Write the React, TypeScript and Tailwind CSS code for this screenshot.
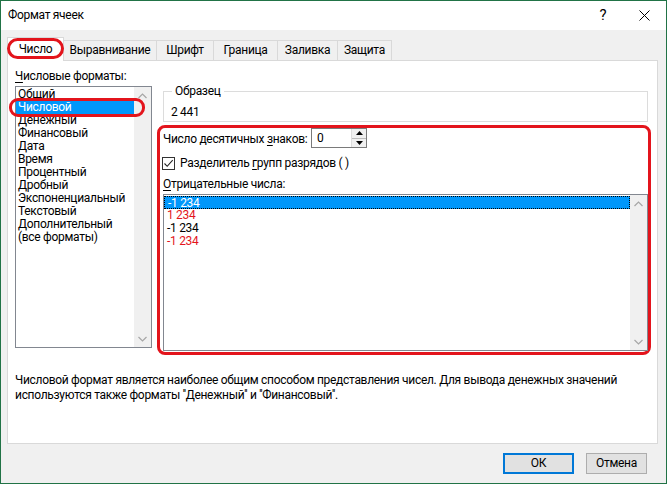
import React from 'react';

const formats = [
  'Общий',
  'Числовой',
  'Денежный',
  'Финансовый',
  'Дата',
  'Время',
  'Процентный',
  'Дробный',
  'Экспоненциальный',
  'Текстовый',
  'Дополнительный',
  '(все форматы)',
];

const negatives = [
  { text: '-1 234', red: false },
  { text: '1 234', red: true },
  { text: '-1 234', red: false },
  { text: '-1 234', red: true },
];

const tabs = [
  { label: 'Выравнивание', w: 'w-[93px]' },
  { label: 'Шрифт', w: 'w-[57px]' },
  { label: 'Граница', w: 'w-[64px]' },
  { label: 'Заливка', w: 'w-[60px]' },
  { label: 'Защита', w: 'w-[54px]' },
];

function Chevron({ down }: { down?: boolean }) {
  return (
    <svg width="9" height="6" viewBox="0 0 9 6" className={down ? 'rotate-180' : ''}>
      <path d="M0.5 5L4.5 1L8.5 5" fill="none" stroke="#a6a6a6" strokeWidth="1.2" />
    </svg>
  );
}

function ScrollBar() {
  return (
    <div className="w-[17px] bg-[#f0f0f0] flex flex-col justify-between items-center">
      <div className="h-[17px] flex items-center justify-center">
        <Chevron />
      </div>
      <div className="h-[17px] flex items-center justify-center">
        <Chevron down />
      </div>
    </div>
  );
}

export default function App() {
  return (
    <div className="w-[667px] h-[484px] border border-[#217346] bg-[#f0f0f0] flex flex-col font-['Roboto',sans-serif] text-[12px] leading-[15px] tracking-[-0.3px] text-black">
      {/* title bar */}
      <div className="h-[29px] bg-white flex items-center pl-[7px] shrink-0">
        <span className="flex-1">Формат ячеек</span>
        <span className="w-[20px] text-center text-[15px] mr-[26px]">?</span>
        <svg width="11" height="11" viewBox="0 0 11 11" className="mr-[16px]">
          <path d="M0.5 0.5L10.5 10.5M10.5 0.5L0.5 10.5" stroke="#000" strokeWidth="1" />
        </svg>
      </div>

      <div className="flex-1 flex flex-col pl-[6px]">
        {/* tabs */}
        <div className="flex items-end h-[30px] shrink-0">
          <div className="relative w-[57px] h-[24px] bg-white border border-b-0 border-[#d9d9d9] flex items-center justify-center z-10 -mb-px">
            Число
            <span className="absolute left-[-1px] top-[0px] w-[57px] h-[21px] rounded-[11px] border-[3px] border-[#e3141c]" />
          </div>
          {tabs.map((t) => (
            <div
              key={t.label}
              className={`${t.w} h-[20px] border border-b-0 border-l-0 border-[#d9d9d9] flex items-center justify-center`}
            >
              {t.label}
            </div>
          ))}
        </div>

        {/* panel */}
        <div className="w-[651px] h-[384px] bg-white border border-[#d9d9d9] flex flex-col shrink-0">
          <div className="flex items-start">
            {/* left column */}
            <div className="ml-[7px] mt-[8px]">
              <div>
                <u className="underline-offset-2">Ч</u>исловые форматы:
              </div>
              <div className="relative mt-[2px] w-[137px] h-[262px] border border-[#828790] flex">
                <div className="flex-1 pt-[1px]">
                  {formats.map((f, i) => (
                    <div
                      key={f}
                      className={`h-[13px] leading-[13px] pl-[2px] ${i === 1 ? 'bg-[#0097fb] text-white' : ''}`}
                    >
                      {f}
                    </div>
                  ))}
                </div>
                <ScrollBar />
                <span className="absolute left-[-7px] top-[11px] w-[136px] h-[19px] rounded-[9px] border-[3px] border-[#e3141c]" />
              </div>
            </div>

            {/* right column */}
            <div className="ml-[5px] mt-[23px] w-[494px]">
              <fieldset className="ml-[6px] w-[485px] border border-[#dcdcdc] px-[7px] pt-[6px] pb-[1px]">
                <legend className="ml-[1px] px-[3px]">Образец</legend>
                <div>2 441</div>
              </fieldset>

              <div className="mt-[3px] border-[3px] border-[#e3141c] rounded-[8px] pl-[3px] pb-[1px]">
                <div className="flex items-center">
                  <span className="w-[148px] whitespace-nowrap pt-[2px]">
                    Число десятичных <u className="underline-offset-2">з</u>наков:
                  </span>
                  <div className="w-[56px] h-[20px] border border-[#7a7a7a] flex">
                    <span className="flex-1 pl-[5px] leading-[18px]">0</span>
                    <div className="w-[15px] flex flex-col border-l border-[#dcdcdc]">
                      <div className="flex-1 bg-[#f0f0f0] flex items-center justify-center border-b border-[#bcbcbc]">
                        <svg width="7" height="4" viewBox="0 0 7 4">
                          <path d="M0 4L3.5 0L7 4Z" fill="#000" />
                        </svg>
                      </div>
                      <div className="flex-1 bg-[#f0f0f0] flex items-center justify-center">
                        <svg width="7" height="4" viewBox="0 0 7 4">
                          <path d="M0 0L3.5 4L7 0Z" fill="#000" />
                        </svg>
                      </div>
                    </div>
                  </div>
                </div>

                <div className="flex items-center mt-[9px] h-[13px]">
                  <div className="w-[13px] h-[13px] border border-[#333] flex items-center justify-center -ml-px">
                    <svg width="11" height="11" viewBox="0 0 11 11">
                      <path d="M1.5 5.5L4.2 8.3L9.7 2.2" fill="none" stroke="#222" strokeWidth="1.1" />
                    </svg>
                  </div>
                  <span className="ml-[5px]">
                    Разделитель <u className="underline-offset-2">г</u>рупп разрядов ( )
                  </span>
                </div>

                <div className="mt-[7px]">
                  <u className="underline-offset-2">О</u>трицательные числа:
                </div>

                <div className="mt-[2px] h-[157px] border border-[#828790] flex">
                  <div className="flex-1 pt-[1px]">
                    {negatives.map((n, i) => (
                      <div
                        key={i}
                        className={`h-[13px] leading-[12px] pl-[3px] ${
                          i === 0
                            ? 'bg-[#0097fb] text-white border border-dotted border-black pl-[2px]'
                            : n.red
                            ? 'text-[#e3141c]'
                            : ''
                        }`}
                      >
                        {n.text}
                      </div>
                    ))}
                  </div>
                  <ScrollBar />
                </div>
              </div>
            </div>
          </div>

          <div className="ml-[7px] mt-[18px] leading-[15px] whitespace-nowrap">
            Числовой формат является наиболее общим способом представления чисел. Для вывода денежных значений
            <br />
            используются также форматы ''Денежный'' и ''Финансовый''.
          </div>
        </div>

        {/* footer */}
        <div className="flex justify-end items-start mt-[9px] pr-[19px]">
          <button className="w-[71px] h-[21px] bg-[#e1e1e1] border-2 border-[#0078d7] leading-[17px]">
            ОК
          </button>
          <button className="ml-[12px] w-[61px] h-[21px] bg-[#e1e1e1] border border-[#adadad] leading-[19px]">
            Отмена
          </button>
        </div>
      </div>
    </div>
  );
}
